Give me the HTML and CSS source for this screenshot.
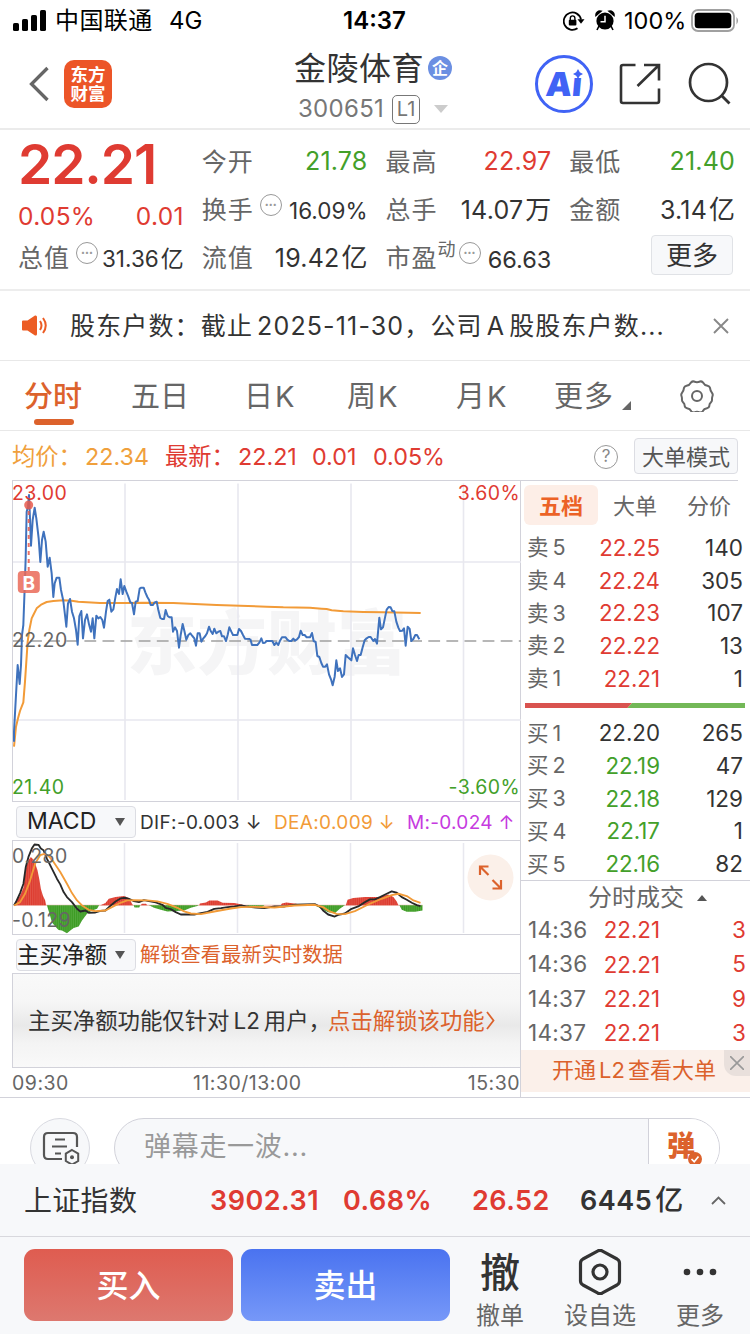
FILE: index.html
```html
<!DOCTYPE html>
<html lang="zh-CN">
<head>
<meta charset="utf-8">
<title>金陵体育 300651</title>
<link rel="stylesheet" href="styles.css">
</head>
<body>
<div class="screen">
  <header class="status">
    <svg class="signal" width="34" height="22" viewBox="0 0 34 22"><rect x="0" y="13" width="6" height="8" rx="1.6"/><rect x="9" y="9" width="6" height="12" rx="1.6"/><rect x="18" y="5" width="6" height="16" rx="1.6"/><rect x="27" y="0" width="6" height="21" rx="1.6"/></svg>
    <span class="carrier">中国联通</span><span class="net">4G</span>
    <span class="clock">14:37</span>
    <svg class="lock" width="22" height="20" viewBox="0 0 22 20"><path d="M14.5 17.3A8.7 8.7 0 1 1 18 8.5" fill="none" stroke="#000" stroke-width="1.8"/><path d="M14.5 8.2h7l-3.5 4.6z"/><rect x="5.8" y="8.7" width="7.6" height="5.7" rx="1"/><path d="M7.3 9V7.2a2.3 2.3 0 0 1 4.6 0V9" fill="none" stroke="#000" stroke-width="1.4"/></svg>
    <svg class="alarm" width="20" height="21" viewBox="0 0 20 21"><circle cx="10" cy="11" r="8.6"/><path d="M1 5.5A4 4 0 0 1 6 1.2ZM19 5.5A4 4 0 0 0 14 1.2ZM4 16l-2 4M16 16l2 4" stroke="#000" stroke-width="1.6"/><path d="M10 5.7v6H5.5" stroke="#fff" stroke-width="1.5" fill="none"/></svg>
    <span class="percent">100%</span>
    <svg class="battery" width="49" height="24" viewBox="0 0 49 24"><rect x="1" y="1" width="42" height="21" rx="6" fill="none" stroke="#a0a0a0" stroke-width="1.8"/><rect x="3.7" y="3.7" width="36.6" height="15.6" rx="3.6"/><path d="M45.5 8q3 3.500 0 7.500z" fill="#999"/></svg>
  </header>

  <nav class="nav">
    <svg class="back" width="22" height="36" viewBox="0 0 22 36"><path d="M19.500 2 3.500 18l16 16" fill="none" stroke="#666" stroke-width="3.3"/></svg>
    <div class="brand"><span>东方</span><span>财富</span></div>
    <div class="title">
      <div class="name"><span>金陵体育</span><i class="ent">企</i></div>
      <div class="code"><span>300651</span><b class="lv">L1</b><svg width="14" height="8" viewBox="0 0 14 8"><path d="M0 0h14L7 8z" fill="#ccc"/></svg></div>
    </div>
    <div class="ai"><span>Aı</span><svg class="spark" width="10" height="10" viewBox="0 0 10 10"><path d="M5 0 6.800 3.200 10 5 6.800 6.800 5 10 3.200 6.800 0 5 3.200 3.200Z" fill="#4063f5"/></svg></div>
    <svg class="share" width="42" height="42" viewBox="0 0 42 42"><path d="M16.500 2H4Q2 2 2 4v34q0 2 2 2h34q2 0 2-2V25.500M25 2h15v15.500M40 2 18.500 23" fill="none" stroke="#333" stroke-width="2.600"/></svg>
    <svg class="search" width="44" height="44" viewBox="0 0 44 44"><circle cx="20.500" cy="20.500" r="18.500" fill="none" stroke="#333" stroke-width="2.700"/><path d="m33 33 8.500 8.500" stroke="#333" stroke-width="2.900"/></svg>
  </nav>

  <section class="quote">
    <div class="lead">
      <div class="price">22.21</div>
      <div class="chg"><span>0.05%</span><span>0.01</span></div>
      <div class="cell"><label>总值<i class="dots">•••</i></label><em class="small">31.36<u>亿</u></em></div>
    </div>
    <div class="col">
      <div class="cell"><label>今开</label><em class="g">21.78</em></div>
      <div class="cell"><label>换手<i class="dots">•••</i></label><em class="small">16.09%</em></div>
      <div class="cell"><label>流值</label><em>19.42<u>亿</u></em></div>
    </div>
    <div class="col">
      <div class="cell"><label>最高</label><em class="r">22.97</em></div>
      <div class="cell"><label>总手</label><em>14.07<u>万</u></em></div>
      <div class="cell"><label>市盈<sup>动</sup><i class="dots tight">•••</i></label><em class="small mid">66.63</em></div>
    </div>
    <div class="col">
      <div class="cell"><label>最低</label><em class="g">21.40</em></div>
      <div class="cell"><label>金额</label><em>3.14<u>亿</u></em></div>
      <div class="cell end"><button class="more">更多</button></div>
    </div>
  </section>

  <section class="notice">
    <svg width="26" height="21" viewBox="0 0 26 21"><path d="M0 6.500Q0 5.500 1 5.500h4.500L13 .5Q15 0 15 2v17q0 2-2 1.500L5.500 15.500H1q-1 0-1-1z" fill="#ec5c24"/><path d="M18 6q3 4.500 0 9M21 3q5.500 7.500 0 15" fill="none" stroke="#ec5c24" stroke-width="2"/></svg>
    <p>股东户数：截止<s></s>2025-11-30，公司<s></s>A<s></s>股股东户数...</p>
    <svg width="16" height="16" viewBox="0 0 16 16"><path d="m1 1 14 14M15 1 1 15" stroke="#888" stroke-width="1.900"/></svg>
  </section>

  <section class="tabs">
    <span class="on">分时</span><span>五日</span><span>日<s></s>K</span><span>周<s></s>K</span><span>月<s></s>K</span><span class="last">更多</span>
    <svg class="corner" width="9" height="9" viewBox="0 0 9 9"><path d="M9 0v9H0z" fill="#666"/></svg>
    <svg class="gear" width="34" height="32" viewBox="0 0 34 32"><path d="M11 2.500q1.500-1.500 3-1 3 1.300 6 0 1.500-.5 3 1 1.500 2.800 4.500 3.300 2 .5 2.500 2 .3 3 2 5 1.200 1.700.5 3.200-.5 1.500-.5 3 .3 2-1 3.200-1.800 1.600-1.700 3.800-.3 2-2.300 2.300-3 .4-4.300 3-1.200 1.600-3 1-2.700-1.200-5.400 0-1.800.6-3-1-1.300-2.600-4.300-3-2-.3-2.300-2.300.1-2.200-1.700-3.800-1.300-1.200-1-3.200 0-1.500-.5-3-.7-1.500.5-3.200 1.700-2 2-5 .5-1.500 2.500-2Q9.500 5.300 11 2.500z" fill="none" stroke="#666" stroke-width="2"/><circle cx="17" cy="16" r="5" fill="none" stroke="#666" stroke-width="2"/></svg>
  </section>

  <section class="avg">
    <span class="y">均价：</span><span class="y v1">22.34</span><span class="r l2">最新：</span><span class="r v2">22.21</span><span class="r v3">0.01</span><span class="r v4">0.05%</span>
    <i class="help">?</i><button class="mode">大单模式</button>
  </section>

  <main class="board">
    <div class="left">
      <div class="chart">
        <svg width="508" height="320" viewBox="0 0 508 320">
          <text class="mark" x="114" y="188">东方财富</text>
          <path d="M112 2.500V319M225 2.500V319M338 2.500V319M450.500 2.500V319M0 81h508M0 239h508" stroke="#e8e8ef" stroke-width="1.600"/>
          <path d="M0 160h508" stroke="#a0a0a0" stroke-width="1.600" stroke-dasharray="11.800 6.300" stroke-dashoffset="1"/>
          <g transform="translate(-13 -6) scale(.33333)" fill="none" stroke-width="6" stroke-linejoin="round">
            <path stroke="#f29b38" d="M42 815 48 755 54 730 60 708 70 682 75 620 79 560 83 500 88 465 95 430 100 420 110 400 125 388 140 381 160 378 190 376 215 377 235 380 300 384 380 384 430 383 520 384 600 388 650 390 720 392 800 395 850 397 930 398 965 401 980 402 995 406 1030 409 1090 411 1150 412 1262 414"/>
            <polyline stroke="#3f72bd" points="42,800 42,770 48,660 53,570 59,627 63,570 66,480 70,450 74,340 77,250 80,110 84,95 87,60 90,130 93,212 98,135 104,98 109,130 116,190 121,261 126,195 131,170 137,200 143,275 149,248 155,295 160,366 164,325 170,308 178,308 183,345 190,378 195,420 199,455 204,385 210,372 216,410 222,430 228,465 233,509 238,423 244,408 249,490 255,435 261,418 267,448 273,470 278,430 283,490 289,422 295,430 301,426 307,435 312,458 318,410 323,378 328,374 334,410 340,403 346,368 351,342 357,357 362,313 368,357 373,333 379,350 385,365 391,382 396,384 402,418 407,380 413,378 419,341 424,338 431,338 436,352 442,366 447,374 452,390 459,390 464,382 470,380 475,405 481,429 486,432 492,432 497,405 503,423 509,427 515,427 519,470 525,457 531,468 537,518 542,480 548,447 553,467 559,494 565,480 571,475 577,483 583,490 588,512 593,475 599,475 604,500 610,490 616,483 621,475 627,455 632,468 638,477 643,461 649,475 655,470 661,468 666,484 672,484 678,498 683,480 688,457 694,470 699,480 712,480 717,462 723,468 729,480 735,491 751,492"/>
            <polyline transform="translate(750 0)" stroke="#3f72bd" points="1,492 6,510 22,510 28,503 34,490 39,504 45,503 50,498 67,498 73,510 79,503 85,510 90,497 96,487 107,487 112,494 118,498 124,498 130,491 135,497 141,493 147,486 152,467 158,480 164,480 170,487 180,487 186,474 191,498 197,501 202,543 208,546 214,564 219,575 226,575 231,568 237,598 243,613 248,631 254,605 259,556 264,588 270,580 276,606 282,598 287,540 293,546 304,556 309,520 315,540 321,558 326,540 332,540 338,517 344,496 350,490 356,486 362,486 370,498 375,492 381,506 388,428 393,463 399,457 405,428 410,404 416,396 422,397 427,408 433,409 439,440 445,458 450,468 457,467 462,460 467,512 473,455 479,462 484,498 490,492 496,480 501,480 508,493"/>
          </g>
          <g opacity=".85"><circle cx="15.700" cy="24" r="4.500" fill="#e85b4d"/><path d="M15.700 30v61" stroke="#e85b4d" stroke-width="2" stroke-dasharray="4 4"/><rect x="4.800" y="90" width="22" height="22" rx="4" fill="#ea6a59"/></g>
          <text class="bee" x="15.800" y="108.500">B</text>
          <text class="ax r" x="-1" y="19">23.00</text><text class="ax" x="-1" y="166">22.20</text><text class="ax g" x="-1" y="313">21.40</text>
          <text class="ax r end" x="507" y="19">3.60%</text><text class="ax g end" x="507" y="313">-3.60%</text>
        </svg>
      </div>
      <div class="ind">
        <div class="pick"><span>MACD</span><svg width="10" height="8" viewBox="0 0 10 8"><path d="M0 0h10L5 8z" fill="#555"/></svg></div>
        <span class="k">DIF:-0.003 ↓</span><span class="o">DEA:0.009 ↓</span><span class="m">M:-0.024 ↑</span>
      </div>
      <div class="macd">
        <svg width="508" height="93" viewBox="0 0 508 93">
          <defs>
            <pattern id="up" width="5.600" height="10" patternUnits="userSpaceOnUse"><rect width="5.600" height="10" fill="#dc3a2e"/><rect width="1.200" height="10" fill="#ea7468"/></pattern>
            <pattern id="down" width="5.600" height="10" patternUnits="userSpaceOnUse"><rect width="5.600" height="10" fill="#3c9c23"/><rect width="1.200" height="10" fill="#71b85f"/></pattern>
          </defs>
          <path d="M111.500 2v90M224.500 2v90M337.500 2v90M450.500 2v90" stroke="#e8e8ef" stroke-width="1.500"/>
          <g transform="translate(-13 -41) scale(.3348)" stroke-linejoin="round">
            <path d="M42 314H1262" stroke="#edb9ae" stroke-width="3"/>
            <path fill="url(#up)" d="M42 314 50 300 60 285 70 262 77 205 85 180 92 170 100 178 105 190 112 210 118 240 122 265 128 285 135 300 138 314ZM300 314 315 308 325 295 345 290 370 287 385 293 390 302 397 314ZM420 314 424 310H436L440 314ZM595 314 597 309 615 306 625 300H650L665 307 700 308 715 311 730 314ZM838 314 842 309 855 306 880 309 910 314ZM1033 314 1038 298 1055 293 1090 290H1130L1160 282 1175 290 1185 303 1190 314Z"/>
            <path fill="url(#down)" d="M140 314 148 340 155 365 165 378 175 388 185 390 200 398 210 390 220 382 235 378 245 360 260 340 275 330 290 325 296 314ZM399 314 402 321H416L419 314ZM445 314 460 322 480 328 500 333 550 330 570 322 592 316 592 314ZM735 314 760 322 780 321 790 314ZM940 314 960 325 980 335 1000 338 1015 325 1030 314ZM1193 314 1200 328 1215 334H1240L1262 330V314Z"/>
            <path fill="none" stroke="#292929" stroke-width="5.500" d="M42 315 50 300 60 278 70 250 77 200 85 170 95 145 103 133 115 134 122 145 130 150 140 175 155 205 170 235 180 252 190 275 200 290 215 305 230 325 240 333 255 330 265 337 285 336 300 331 315 330 330 316 345 303 360 294 375 292 385 295 400 302 415 305 430 299 445 302 465 306 485 313 495 322 510 326 525 335 540 342 580 342 600 338 620 334 640 325 660 323 680 320 700 318 720 315 745 319 765 321 790 323 820 318 850 318 880 313 910 312 940 311 955 318 965 330 980 342 1000 348 1010 343 1030 339 1050 325 1070 318 1090 305 1105 297 1120 297 1135 290 1155 280 1170 273 1185 277 1200 290 1215 298 1230 307 1245 314 1256 317"/>
            <path fill="none" stroke="#f29b38" stroke-width="5.500" d="M42 315 60 305 75 280 90 240 105 190 120 165 133 161 145 167 160 185 180 215 200 250 215 278 230 300 245 315 265 328 285 332 315 330 340 317 360 307 380 300 400 299 440 300 470 303 500 310 530 322 550 333 570 339 600 341 640 333 690 324 720 320 760 319 820 321 880 315 940 313 965 320 985 333 1005 340 1030 341 1060 332 1100 312 1140 295 1170 284 1190 280 1215 287 1235 300 1256 307"/>
          </g>
          <text class="ax" x="-1" y="22">0.280</text><text class="ax" x="-1" y="86">-0.129</text>
          <circle cx="477.500" cy="36.500" r="23" fill="#fbf0e9"/>
          <path d="M467 34v-8.500h8.500M467.500 26l8 8M488 39v8.500h-8.500M487.500 47l-8-8" fill="none" stroke="#dc622c" stroke-width="2.200"/>
        </svg>
      </div>
      <div class="ind">
        <div class="pick wide"><span>主买净额</span><svg width="10" height="8" viewBox="0 0 10 8"><path d="M0 0h10L5 8z" fill="#555"/></svg></div>
        <span class="unlock">解锁查看最新实时数据</span>
      </div>
      <div class="locked"><span>主买净额功能仅针对<s></s>L2<s></s>用户，</span><a>点击解锁该功能</a><svg width="9" height="19" viewBox="0 0 9 19"><path d="m1 1 6.500 8.500L1 18" fill="none" stroke="#dc622c" stroke-width="1.800"/></svg></div>
      <div class="times"><span>09:30</span><span>11:30/13:00</span><span>15:30</span></div>
    </div>

    <aside class="right">
      <div class="rtabs"><span class="on">五档</span><span>大单</span><span>分价</span></div>
      <div class="lvls">
        <div><label>卖<s></s>5</label><b class="r">22.25</b><em>140</em></div>
        <div><label>卖<s></s>4</label><b class="r">22.24</b><em>305</em></div>
        <div><label>卖<s></s>3</label><b class="r">22.23</b><em>107</em></div>
        <div><label>卖<s></s>2</label><b class="r">22.22</b><em>13</em></div>
        <div><label>卖<s></s>1</label><b class="r">22.21</b><em>1</em></div>
      </div>
      <svg class="ratio" width="220" height="5" viewBox="0 0 220 5"><path d="M0 0h107l-4.500 5H0z" fill="#d9534f"/><path d="M107 0h113v5H102.500z" fill="#73b857"/></svg>
      <div class="lvls">
        <div><label>买<s></s>1</label><b>22.20</b><em>265</em></div>
        <div><label>买<s></s>2</label><b class="g">22.19</b><em>47</em></div>
        <div><label>买<s></s>3</label><b class="g">22.18</b><em>129</em></div>
        <div><label>买<s></s>4</label><b class="g">22.17</b><em>1</em></div>
        <div><label>买<s></s>5</label><b class="g">22.16</b><em>82</em></div>
      </div>
      <div class="dealhead"><span>分时成交</span><svg width="10" height="6" viewBox="0 0 10 6"><path d="M0 6h10L5 0z" fill="#555"/></svg></div>
      <div class="deals">
        <div><label>14:36</label><b>22.21</b><em>3</em></div>
        <div><label>14:36</label><b>22.21</b><em>5</em></div>
        <div><label>14:37</label><b>22.21</b><em>9</em></div>
        <div><label>14:37</label><b>22.21</b><em>3</em></div>
      </div>
      <div class="promo"><span>开通<s></s>L2<s></s>查看大单</span><div class="shut"><svg width="14" height="14" viewBox="0 0 14 14"><path d="m0 0 14 14M14 0 0 14" stroke="#999" stroke-width="1.600"/></svg></div></div>
    </aside>
  </main>

  <section class="danmu">
    <div class="round"><svg width="38" height="34" viewBox="0 0 38 34"><path d="M20 28H6q-4 0-4-4V6q0-4 4-4h25q4 0 4 4v10M13 8.500h10M10 15.500h15M13 22.500h6" fill="none" stroke="#555" stroke-width="2.200"/><path d="m30 19 6.200 3.600v7.400L30 33.600 23.800 30v-7.400z" fill="none" stroke="#555" stroke-width="2"/><circle cx="30" cy="26.300" r="2"  fill="#555"/></svg></div>
    <div class="input"><span>弹幕走一波...</span><div class="send"><b>弹</b><svg class="tick" width="14" height="14" viewBox="0 0 14 14"><circle cx="7" cy="7" r="7" fill="#dc622c"/><path d="m3.500 7 2.700 2.700L10.500 4.500" fill="none" stroke="#fff" stroke-width="1.700"/></svg></div></div>
  </section>

  <section class="index">
    <span class="iname">上证指数</span><b class="r i1">3902.31</b><b class="r i2">0.68%</b><b class="r i3">26.52</b><b class="i4">6445<u>亿</u></b>
    <svg width="15" height="9" viewBox="0 0 15 9"><path d="m1 8 6.500-6.500L14 8" fill="none" stroke="#666" stroke-width="1.800"/></svg>
  </section>

  <footer class="actions">
    <button class="buy">买入</button><button class="sell">卖出</button>
    <div class="act a1"><b>撤</b><span>撤单</span></div>
    <div class="act a2"><svg width="44" height="46" viewBox="0 0 44 46"><path d="M20 1.800q2-1 4 0l15 8.200q2.500 1.500 2.500 4v18q0 2.500-2.500 4L24 44.200q-2 1-4 0L5 36q-2.500-1.500-2.500-4V14q0-2.500 2.500-4z" fill="none" stroke="#333" stroke-width="3.200"/><circle cx="22" cy="23" r="7" fill="none" stroke="#333" stroke-width="3.200"/></svg><span>设自选</span></div>
    <div class="act a3"><svg width="44" height="46" viewBox="0 0 44 46"><g fill="#333"><circle cx="9" cy="23" r="3.300"/><circle cx="22" cy="23" r="3.300"/><circle cx="35" cy="23" r="3.300"/></g></svg><span>更多</span></div>
  </footer>
</div>
</body>
</html>
```
FILE: styles.css
```css
* { box-sizing: border-box; }
body { margin: 0; background: #fff; }
.screen { width: 750px; height: 1334px; overflow: hidden; display: flex; flex-direction: column; font-family: Inter, "Noto Sans CJK SC", sans-serif; color: #333; line-height: 1; white-space: nowrap; }
.screen > * { flex: none; }
i, em { font-style: normal; }
u, s { text-decoration: none; }
s { display: inline-block; width: 4px; }
svg { flex: none; display: block; }
button { font: inherit; padding: 0; border: 0; }
.r { color: #df3b32; fill: #df3b32; }
.g { color: #43a02a; fill: #43a02a; }

.status { height: 40px; display: flex; align-items: center; color: #000; font-size: 24px; padding: 1px 0 0 13px; }
.carrier { margin-left: 8px; width: 114px; letter-spacing: .4px; padding-top: 1px; }
.net { width: 174px; }
.clock { width: 220px; font-weight: 600; }
.alarm { margin-left: 10px; }
.percent { margin-left: 9px; width: 67px; font-size: 23.5px; }

.nav { height: 90px; border-bottom: 2px solid #ebebeb; display: flex; align-items: center; padding-left: 28px; }
.brand { margin-left: 14px; width: 48px; height: 48px; border-radius: 10px; background: #ec5528; color: #fff; font-size: 17.5px; font-weight: 700; display: flex; flex-direction: column; align-items: center; justify-content: center; gap: 2px; }
.title { margin-left: 182px; width: 241px; height: 88px; }
.name { display: flex; align-items: center; height: 52px; padding-top: 5px; font-size: 32px; letter-spacing: .5px; }
.ent { width: 24px; height: 24px; border-radius: 50%; background: #6b8fe2; color: #fff; font-size: 16px; font-weight: 700; letter-spacing: 0; display: grid; place-items: center; margin: -2px 0 0 4px; }
.code { display: flex; align-items: center; height: 34px; padding-left: 4px; font-size: 24px; color: #777; letter-spacing: .3px; }
.lv { font-weight: 400; font-size: 20px; width: 28px; height: 29px; border: 1.5px solid #777; border-radius: 5px; display: grid; place-items: center; margin: 0 14px 0 8px; letter-spacing: 0; }
.ai { position: relative; width: 58px; height: 58px; border: 3px solid #4063f5; border-radius: 50%; color: #4063f5; font-size: 33px; font-weight: 900; display: grid; place-items: center; }
.ai span { transform: skewX(-5deg); }
.spark { position: absolute; left: 35px; top: 11px; }
.share { margin-left: 26px; }
.search { margin-left: 27px; }

.quote { height: 161px; border-bottom: 2px solid #ededed; display: flex; padding: 7px 15px 0 19px; gap: 19px; font-size: 25px; }
.lead { width: 165px; }
.col { width: 165px; }
.lead .price { height: 55px; line-height: 55px; font-size: 55px; font-weight: 600; color: #df3b32; letter-spacing: -1.1px; margin-left: -1px; }
.chg { height: 41px; display: flex; justify-content: space-between; align-items: center; padding-top: 8px; margin-left: -1px; color: #df3b32; font-size: 24.5px; letter-spacing: .3px; }
.cell { height: 48px; display: flex; align-items: center; justify-content: space-between; }
.cell label { color: #666; display: flex; align-items: center; letter-spacing: 1px; padding-top: 2px; margin-left: -1px; }
.cell em { letter-spacing: .2px; padding-top: 1px; }
.cell em u { margin-left: 2px; font-size: 26px; letter-spacing: 0; }
.cell .small { font-size: 22.5px; padding-top: 5px; letter-spacing: 0; }
.cell .small u { font-size: 23px; }
.cell .mid { font-size: 23.5px; }
.cell sup { font-size: 18px; align-self: flex-start; line-height: 1; margin-top: -5px; letter-spacing: 0; vertical-align: top; }
.dots { width: 22px; height: 22px; border: 1.5px solid #999; border-radius: 50%; color: #999; font-size: 7px; display: grid; place-items: center; margin: -11px 0 0 6px; letter-spacing: 0; }
.tight { margin-left: 3px; }
.end { justify-content: flex-end; padding-right: 2px; }
.more { width: 82px; height: 40px; border: 1.5px solid #e0e2e6; border-radius: 4px; background: #f7f8fa; color: #333; font-size: 26px; margin-top: -4px; padding-top: 2px; }

.notice { height: 70px; border-bottom: 1.5px solid #e8e8e8; display: flex; align-items: center; padding-left: 22px; font-size: 25px; }
.notice p { margin: 1px 0 0 22px; width: 643px; letter-spacing: 1.15px; }

.tabs { height: 70px; border-bottom: 1.5px solid #e8e8e8; display: flex; align-items: center; padding-left: 24px; font-size: 29px; color: #666; }
.tabs span { width: 107px; height: 68px; line-height: 70px; flex: none; }
.tabs s { width: 2px; }
.tabs .on { color: #dc622c; font-weight: 500; position: relative; }
.tabs .on::after { content: ""; position: absolute; left: 10px; bottom: 5px; width: 40px; height: 6px; border-radius: 3px; background: #dc622c; }
.tabs span:nth-child(2) { width: 113px; }
.tabs span:nth-child(3) { width: 103px; }
.tabs span:nth-child(4) { width: 109px; }
.tabs span:nth-child(5) { width: 98px; }
.tabs .last { width: 68px; letter-spacing: 1px; }
.corner { margin-top: 20px; }
.gear { margin-left: 49px; }

.avg { height: 49px; display: flex; align-items: center; padding: 2px 0 0 12px; font-size: 23.3px; }
.y { color: #f0a03c; }
.avg .y:first-child { width: 73px; }
.v1 { width: 80px; } .l2 { width: 73px; } .v2 { width: 74px; } .v3 { width: 61px; } .v4 { width: 221px; }
.help { width: 24px; height: 24px; border: 1.5px solid #999; border-radius: 50%; color: #888; font-size: 17px; display: grid; place-items: center; }
.mode { width: 104px; height: 36px; margin: -2px 0 0 16px; border: 1.5px solid #dcdde3; border-radius: 4px; background: #f7f8fa; color: #555; font-size: 22px; padding-top: 2px; }

.board { height: 618px; display: flex; border-bottom: 1.5px solid #d2d2da; }
.left { width: 521px; border-right: 1.500px solid #d2d2da; padding-left: 12px; }
.chart { height: 322px; border: solid #d2d2da; border-width: 1px 0 1px 1px; }
.mark { font-size: 70px; font-weight: 900; fill: #f5f5f6; }
.ax { font-size: 19.500px; fill: #666; letter-spacing: .4px; }
.ax.r { fill: #df3b32; } .ax.g { fill: #43a02a; }
text.end { text-anchor: end; }
.bee { font-size: 19px; font-weight: 700; fill: #fff; text-anchor: middle; }
.ind { height: 38px; display: flex; align-items: center; padding: 2px 0 0 4px; font-size: 19px; }
.pick { width: 120px; height: 32px; border: 1.500px solid #dcdde3; border-radius: 4px; background: #f7f8fa; font-size: 23px; display: flex; align-items: center; justify-content: space-between; padding: 0 10px; color: #222; margin-top: -1px; }
.wide { padding-left: 0; font-size: 22.500px; }
.wide span { padding-top: 2px; }
.k { margin-left: 4px; width: 134px; letter-spacing: .35px; } .o { color: #f29b38; width: 133px; letter-spacing: .35px; } .m { color: #c63be0; letter-spacing: .3px; }
.unlock { margin-left: 4px; font-size: 20.300px; color: #dc622c; padding-top: 1px; }
.macd { height: 95px; border: solid #d2d2da; border-width: 1px 0 1px 1px; }
.locked { height: 95px; border: solid #d2d2da; border-width: 1px 0 1px 1px; background: linear-gradient(#f9f9f9, #f6f6f6 30%, #e9e9e9 55%, #f4f4f4 75%, #f9f9f9); display: flex; align-items: center; padding: 2px 0 0 15px; font-size: 22.400px; }
.locked a { color: #dc622c; }
.locked svg { margin-left: 1px; margin-top: -2px; }
.locked span { width: 300px; }
.times { height: 28px; display: flex; align-items: center; font-size: 19.500px; color: #666; padding-top: 4px; letter-spacing: .5px; }
.times span:first-child { width: 181px; }
.times span:last-child { margin-left: auto; }

.right { flex: 1; display: flex; flex-direction: column; }
.rtabs { height: 52px; border-top: 1px solid #d2d2da; width: 217px; display: flex; padding: 4px 0 0 3px; font-size: 22px; color: #666; }
.rtabs span { flex: none; width: 74px; height: 40px; line-height: 42px; text-align: center; border-radius: 6px; }
.rtabs .on { background: #fdeee7; color: #ec6226; font-weight: 700; }
.lvls > div, .deals > div { height: 32.700px; display: flex; align-items: center; padding: 0 7px 0 6px; font-size: 22.500px; }
.lvls label, .deals label { width: 62px; color: #666; }
.lvls label { font-size: 21.500px; }
.lvls b, .deals b { font-weight: 400; width: 71px; text-align: right; font-size: 22.300px; }
.lvls em, .deals em { flex: 1; text-align: right; }
.ratio { margin: 8px 0 9px 4px; }
.dealhead { height: 34px; margin-top: -1px; border-top: 1.500px solid #d2d2da; display: flex; align-items: center; padding: 1px 0 0 67px; gap: 13px; font-size: 24px; color: #666; }
.deals > div { height: 34.200px; padding: 0 4px 0 7px; }
.deals b, .deals em { color: #df3b32; }
.deals label { width: 61px; letter-spacing: .3px; }
.promo { position: relative; height: 42px; margin-top: auto; margin-bottom: 5px; background: #fbf0ea; color: #dc622c; display: flex; align-items: center; padding: 0 0 2px 31px; font-size: 22px; }
.promo s { width: 3px; }
.shut { position: absolute; right: 0; top: 0; width: 26px; height: 26px; background: #e9e0dc; border-radius: 0 0 0 12px; display: grid; place-items: center; }

.danmu { height: 66px; padding: 20px 0 0 30px; display: flex; align-items: flex-start; overflow: hidden; }
.round { width: 60px; height: 60px; border: 1.500px solid #d9dae1; border-radius: 50%; background: #f7f8fa; padding: 12px 0 0 11px; flex: none; }
.input { margin-left: 24px; width: 606px; height: 60px; border: 1.500px solid #d2d2da; border-radius: 30px; background: #f7f8fa; display: flex; overflow: hidden; flex: none; }
.input span { width: 533px; padding-left: 29px; line-height: 55px; font-size: 27px; color: #999; letter-spacing: .7px; }
.send { position: relative; flex: 1; border-left: 1.500px solid #d2d2da; background: #fff; color: #dc622c; padding: 13px 0 0 18px; font-size: 28px; }
.send b { font-weight: 900; }
.tick { position: absolute; left: 39px; top: 33px; }

.index { height: 73px; background: #f7f8fa; border-bottom: 1.500px solid #d8d8dd; display: flex; align-items: center; padding-left: 24px; font-size: 27px; }
.iname { width: 186px; font-size: 28px; letter-spacing: .3px; padding-top: 1px; }
.index b { font-weight: 600; letter-spacing: .5px; }
.index u { font-weight: 500; margin-left: 3px; font-size: 28px; }
.i1 { width: 133px; } .i2 { width: 129px; } .i3 { width: 108px; } .i4 { width: 131px; }

.actions { flex: 1 !important; background: #f7f8fa; display: flex; padding: 12px 0 0 24px; }
.buy, .sell { width: 209px; height: 72px; border-radius: 11px; color: #fff; font-size: 32px; font-weight: 500; padding-top: 2px; }
.buy { background: linear-gradient(#df5c50, #dd786f); }
.sell { margin-left: 8px; background: linear-gradient(#4a73f0, #7698f8); }
.act { width: 100px; height: 82px; display: flex; flex-direction: column; align-items: center; color: #666; font-size: 24px; gap: 9px; }
.act b { color: #333; font-size: 40px; font-weight: 500; height: 46px; line-height: 48px; }
```
